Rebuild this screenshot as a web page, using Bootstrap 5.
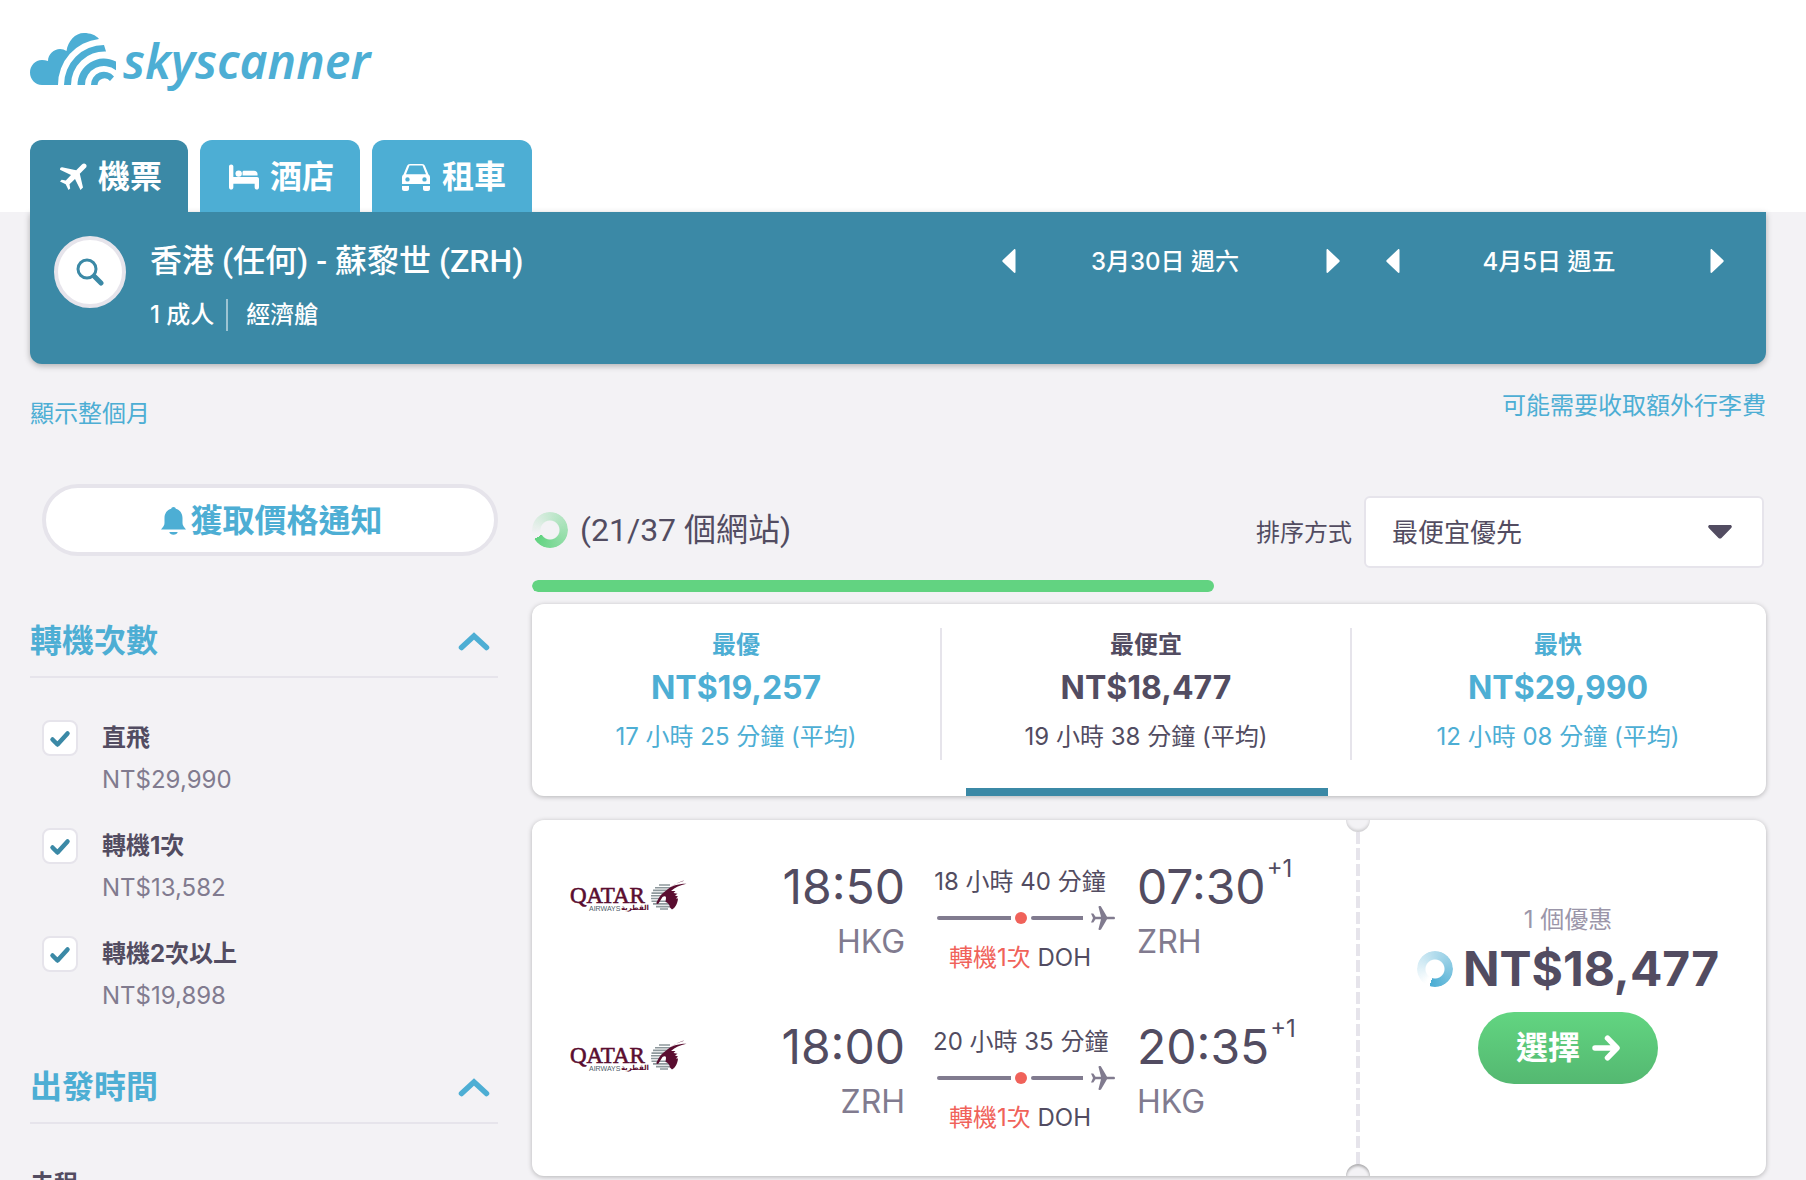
<!DOCTYPE html>
<html lang="zh-Hant">
<head>
<meta charset="utf-8">
<meta name="viewport" content="width=device-width, initial-scale=1">
<title>Skyscanner 機票</title>
<link href="https://cdn.jsdelivr.net/npm/bootstrap@5.3.0/dist/css/bootstrap.min.css" rel="stylesheet">
<style>
:root{--sky:#4daed4;--deep:#3b89a6;--ink:#524c61;--muted:#817b8f;--line:#e6e4eb;--green:#62d381}
body{font-family:Inter,"Noto Sans CJK TC",sans-serif;font-size:24px;line-height:32px;color:var(--ink);background:#f3f2f5;height:100vh;overflow:hidden}
a{color:var(--sky);text-decoration:none}
svg{display:block;flex:none;fill:currentColor}
.t-lg{font-size:32px;line-height:40px}
.t-xl{font-size:48px;line-height:56px}
.narrow-latin{font-family:Roboto,"Noto Sans CJK TC",sans-serif}
.gutters{padding-left:30px;padding-right:40px}
.topbar{background:#fff;height:212px}
.brand{color:var(--sky);height:58px;margin-top:33px;gap:6px}
.wordmark{font:italic 600 48px/56px "Noto Sans",sans-serif}
.service{background:var(--sky);color:#fff;height:72px;border-radius:12px 12px 0 0;padding:2px 26px 0 29px;gap:11px;font-weight:700}
.service.active{background:var(--deep)}
.summary{background:var(--deep);color:#fff;height:152px;border-radius:0 0 12px 12px;padding:24px 30px 0 24px;box-shadow:0 2px 6px rgba(0,0,0,.28);font-weight:500}
.search-btn{width:72px;height:72px;border:4px solid var(--line);color:var(--deep);background:#fff}
.route-name{padding:5px 0 18px}
.pax{border-right:2px solid rgba(255,255,255,.5);padding-right:12px;margin-right:18px}
.cabin-row{line-height:32px}
.stepper{width:362px;height:50px;padding:0 12px}
.stepper button{background:none;border:0;color:#fff;padding:0}
.stepper span{padding:2px 12px 0 0}
.side{width:468px;flex:none}
.alert-btn{height:72px;border:4px solid var(--line);background:#fff;color:var(--sky);font-weight:700;gap:4px;margin-left:12px;padding:2px 0 0 4px}
.filter-head{color:var(--sky);font-weight:700;border:0;border-bottom:2px solid var(--line);background:none;height:72px;padding:2px 7px 2px 0}
.filter-list{padding:42px 0 0 12px;gap:24px}
.filter-list .form-check-input{width:36px;height:36px;border:2px solid var(--line);border-radius:8px;margin:0;background-color:#fff;flex:none;box-shadow:none}
.filter-list .form-check-input:checked{background:#fff url("data:image/svg+xml,%3Csvg xmlns='http://www.w3.org/2000/svg' viewBox='0 0 32 32'%3E%3Cpath d='M8.500 17.500l5 5L23.500 11.500' fill='none' stroke='%233b89a6' stroke-width='4.500' stroke-linecap='round' stroke-linejoin='round'/%3E%3C/svg%3E") center/32px 32px no-repeat}
.filter-list .form-check-label{line-height:36px}
.price-note{color:var(--muted);display:block;line-height:48px}
.ring{width:36px;height:36px;border-radius:50%;flex:none;-webkit-mask:radial-gradient(circle,transparent 9px,#000 10px);mask:radial-gradient(circle,transparent 9px,#000 10px)}
.ring-green{background:conic-gradient(from 240deg,rgba(98,211,129,0) 15deg,#62d381 355deg)}
.ring-blue{background:conic-gradient(from 198deg,rgba(77,174,212,0) 15deg,#4daed4 355deg)}
.sort-select{width:400px;height:72px;border:2px solid var(--line);border-radius:6px;font-size:26px;color:var(--ink);padding:0 60px 0 26px;background:#fff url("data:image/svg+xml,%3Csvg xmlns='http://www.w3.org/2000/svg' viewBox='0 0 24 14'%3E%3Cpath d='M2 0h20c1.800 0 2.400 1.700 1.200 2.900l-9.700 10c-.8.800-2.200.800-3 0L.8 2.900C-.4 1.700.2 0 2 0z' fill='%23524c61'/%3E%3C/svg%3E") right 30px center/24px 14px no-repeat}
.load-track{height:12px;background:none;border-radius:6px;margin:12px 0}
.load-track .progress-bar{background:var(--green);border-radius:6px}
.panel{background:#fff;border-radius:12px;box-shadow:0 1px 5px rgba(0,0,0,.26)}
.modes{display:grid;grid-template-columns:410fr 410fr 414fr;height:192px}
.mode{padding:24px 0;color:var(--sky);border:0;background:none;position:relative;display:flex;flex-direction:column;justify-content:flex-start;align-items:stretch}
.mode>span{display:flex;flex-direction:column;height:132px;border-right:2px solid var(--line);line-height:34px}
.mode:last-child>span{border-color:transparent}
.mode .t-lg{line-height:52px}
.mode .avg{line-height:46px}
.mode.on{color:var(--ink)}
.mode.on::after{content:"";position:absolute;left:24px;right:24px;bottom:0;height:8px;background:var(--deep)}
.ticket{margin-top:24px;height:356px}
.legs{width:824px;padding:39px 0 0 38px;flex:none}
.leg{height:160px}
.carrier{padding-top:20px;width:195px}
.depart{width:140px;text-align:right}
.route{width:174px;margin:7px 30px 0 28px;text-align:center;white-space:nowrap}
.place{color:var(--muted);line-height:54px}
.red-stop{color:#f0625a}
.plus{line-height:20px;margin-left:1px}
.track{gap:8px;padding-left:4px;margin:8px -8px 12px 0;height:24px;color:var(--muted)}
.rail{height:4px;background:var(--muted);border-radius:2px 0 0 2px}
.stop-dot{width:12px;height:12px;border-radius:50%;background:#f0625a;margin:0 4px}
.perforation{width:4px;margin:12px 0;flex:none;position:relative;background:repeating-linear-gradient(var(--line) 0 12px,transparent 12px 16px)}
.perforation::before,.perforation::after{content:"";position:absolute;left:-10px;width:24px;height:12px;background:#f3f2f5}
.perforation::before{top:-12px;border-radius:0 0 12px 12px;box-shadow:inset 0 -2px 3px rgba(0,0,0,.15)}
.perforation::after{bottom:-12px;border-radius:12px 12px 0 0;box-shadow:inset 0 2px 3px rgba(0,0,0,.3)}
.offer-side{padding:84px 0 0 10px}
.offers{color:#9b96a9}
.best-price{gap:10px;padding:5px 0 15px}
.select-btn{width:180px;height:72px;border:0;color:#fff;font-weight:700;gap:12px;background:linear-gradient(#62d581,#54b871)}
</style>
</head>
<body>
<header class="topbar gutters d-flex flex-column justify-content-between overflow-hidden">
  <a href="#" class="brand d-flex" aria-label="skyscanner">
    <svg width="87" height="52" viewBox="0 0 87 52"><path d="M12 52C5 52 0 46 0 39.500S5 27 12 27c2 0 4 .3 6 1C18 21 24 16 30 16c2.500 0 4.500.7 6.500 2C38 8 45 0 54 0c6 0 12 2 15 6A46 46 0 0 0 28 52z"/><path d="M34 52A40 40 0 0 1 74 12l2 6.500A33.500 33.500 0 0 0 41 52z"/><path d="M47.500 52A26.500 26.500 0 0 1 86 28.400V37.300A19 19 0 0 0 55 52z"/><path d="M61 52A13 13 0 0 1 84 43.500L80 48a7 7 0 0 0-12.500 4z"/></svg>
    <span class="wordmark">skyscanner</span>
  </a>
  <nav class="d-flex t-lg" style="gap:12px">
    <a href="#" class="service active d-flex align-items-center">
      <svg width="28" height="28" viewBox="0 0 28 28"><path d="M26.800 1.200c1.300 1.300.8 2.800-.3 3.900L20.800 10.800 24 24.500 21.500 27 16 16l-5.500 5.300.7 4.200L9.500 27 6.700 21.300 1 18.500l1.700-1.700 4.100.7L12 12 1.500 7C.3 6.300 1.500 4.200 3 4.300L17.200 7.200 22.900 1.500C24 .4 25.500-.1 26.800 1.200z"/></svg>機票</a>
    <a href="#" class="service d-flex align-items-center">
      <svg width="30" height="26" viewBox="0 0 31 26"><path d="M2.200 0C3.500 0 4.500 1 4.500 2v11H29c1.200 0 2 .8 2 2v8.500c0 3.200-4.500 3.200-4.500 0V20h-22v3.500c0 3.200-4.500 3.200-4.500 0V2C0 1 1 0 2.200 0z"/><circle cx="10" cy="9.500" r="3.300"/><path d="M14 11.500V8c0-.9.600-1.500 1.500-1.500H26c2 0 3.500 1.500 3.500 3.500v1.500z"/></svg>酒店</a>
    <a href="#" class="service d-flex align-items-center">
      <svg width="30" height="28" viewBox="-1 0 30 28"><path fill-rule="evenodd" d="M8 1h12c1.500 0 2.500.8 3 2l3.500 8.500c1 .8 1.500 1.700 1.500 3V21H0v-6.500c0-1.300.5-2.200 1.500-3L5 3c.5-1.200 1.500-2 3-2zM7.500 2.600 4 11.200h20L20.500 2.600zM5.500 14.200a2.200 2.200 0 1 0 0 4.400 2.200 2.200 0 0 0 0-4.400zm17 0a2.200 2.200 0 1 0 0 4.400 2.200 2.200 0 0 0 0-4.400z"/><path d="M0 23h7v3c0 1-1 2-2 2H2c-1 0-2-1-2-2zM21 23h7v3c0 1-1 2-2 2h-3c-1 0-2-1-2-2z"/></svg>租車</a>
  </nav>
</header>

<div class="gutters">
  <section class="summary d-flex">
    <button type="button" class="search-btn rounded-circle d-flex align-items-center justify-content-center p-0" aria-label="搜尋">
      <svg width="28" height="28" viewBox="0 0 28 28" stroke="currentColor"><g fill="none"><circle cx="11" cy="11" r="9" stroke-width="3"/><path d="M18.500 18.500l6.500 6.500" stroke-width="5" stroke-linecap="round"/></g></svg>
    </button>
    <div class="ms-4 flex-grow-1">
      <div class="t-lg route-name narrow-latin">香港 (任何) - 蘇黎世 (ZRH)</div>
      <div class="d-flex cabin-row"><span class="pax">1 成人</span><span>經濟艙</span></div>
    </div>
    <div class="d-flex" style="gap:22px">
      <div class="stepper d-flex align-items-center justify-content-between">
        <button type="button" aria-label="前一天"><svg width="14" height="24" viewBox="0 0 14 24"><path d="M13.500 1v22c0 1-1 1.200-1.600.5L.8 13c-.7-.7-.7-1.300 0-2L11.900.5c.6-.7 1.600-.5 1.600.5z"/></svg></button>
        <span>3月30日 週六</span>
        <button type="button" aria-label="後一天"><svg width="14" height="24" viewBox="0 0 14 24"><path d="M.5 1v22c0 1 1 1.200 1.600.5L13.200 13c.7-.7.7-1.300 0-2L2.100.5C1.500-.2.5 0 .5 1z"/></svg></button>
      </div>
      <div class="stepper d-flex align-items-center justify-content-between">
        <button type="button" aria-label="前一天"><svg width="14" height="24" viewBox="0 0 14 24"><path d="M13.500 1v22c0 1-1 1.200-1.600.5L.8 13c-.7-.7-.7-1.300 0-2L11.900.5c.6-.7 1.600-.5 1.600.5z"/></svg></button>
        <span>4月5日 週五</span>
        <button type="button" aria-label="後一天"><svg width="14" height="24" viewBox="0 0 14 24"><path d="M.5 1v22c0 1 1 1.200 1.600.5L13.200 13c.7-.7.7-1.300 0-2L2.100.5C1.500-.2.5 0 .5 1z"/></svg></button>
      </div>
    </div>
  </section>

  <div class="d-flex justify-content-between" style="padding-top:26px;height:120px">
    <a href="#" class="pt-2">顯示整個月</a>
    <a href="#">可能需要收取額外行李費</a>
  </div>

  <div class="d-flex" style="gap:34px">
    <aside class="side">
      <div class="d-flex"><button type="button" class="alert-btn t-lg rounded-pill flex-grow-1 d-flex align-items-center justify-content-center">
        <svg width="25" height="28" viewBox="0 0 25 28"><path d="M12.500 0c1.300 0 2 .8 2.300 1.800C19 3 21.500 6.500 21.500 11v5c0 2.500 1.500 3.800 3.500 6.500H0C2 19.800 3.500 18.500 3.500 16v-5c0-4.500 2.500-8 6.700-9.200C10.500.8 11.200 0 12.500 0zM8.300 25h8.400c-.5 1.800-2 2.800-4.200 2.800S8.800 26.800 8.300 25z"/></svg>獲取價格通知</button></div>

      <button type="button" class="filter-head t-lg w-100 d-flex justify-content-between align-items-center" style="margin-top:50px">轉機次數
        <svg width="34" height="20" viewBox="0 0 34 20"><path d="M4.500 16.500L17 5l12.500 11.500" fill="none" stroke="currentColor" stroke-width="5.500" stroke-linecap="round"/></svg></button>
      <div class="filter-list d-flex flex-column">
        <div class="d-flex gap-4"><input class="form-check-input" type="checkbox" id="s0" checked><label class="form-check-label" for="s0"><b>直飛</b><span class="price-note">NT$29,990</span></label></div>
        <div class="d-flex gap-4"><input class="form-check-input" type="checkbox" id="s1" checked><label class="form-check-label" for="s1"><b>轉機1次</b><span class="price-note">NT$13,582</span></label></div>
        <div class="d-flex gap-4"><input class="form-check-input" type="checkbox" id="s2" checked><label class="form-check-label" for="s2"><b>轉機2次以上</b><span class="price-note">NT$19,898</span></label></div>
      </div>

      <button type="button" class="filter-head t-lg w-100 d-flex justify-content-between align-items-center" style="margin-top:32px">出發時間
        <svg width="34" height="20" viewBox="0 0 34 20"><path d="M4.500 16.500L17 5l12.500 11.500" fill="none" stroke="currentColor" stroke-width="5.500" stroke-linecap="round"/></svg></button>
      <div class="fw-bold" style="padding-top:44px">去程</div>
    </aside>

    <main class="flex-grow-1">
      <div class="d-flex align-items-center" style="padding:12px 2px 0 0">
        <div class="d-flex align-items-center flex-grow-1 t-lg narrow-latin pb-1" style="gap:12px"><i class="ring ring-green"></i>(21/37 個網站)</div>
        <label for="sort" style="padding:2px 12px 0 0">排序方式</label>
        <select id="sort" class="form-select sort-select"><option>最便宜優先</option></select>
      </div>
      <div class="progress load-track" role="progressbar" aria-label="搜尋進度"><div class="progress-bar" style="width:55.3%"></div></div>

      <div class="panel modes">
        <button type="button" class="mode"><span><b>最優</b><b class="t-lg">NT$19,257</b><span class="avg">17 小時 25 分鐘 (平均)</span></span></button>
        <button type="button" class="mode on"><span><b>最便宜</b><b class="t-lg">NT$18,477</b><span class="avg">19 小時 38 分鐘 (平均)</span></span></button>
        <button type="button" class="mode"><span><b>最快</b><b class="t-lg">NT$29,990</b><span class="avg">12 小時 08 分鐘 (平均)</span></span></button>
      </div>

      <article class="panel ticket d-flex">
        <div class="legs">
          <div class="leg d-flex">
            <div class="carrier">
              <svg width="117" height="36" viewBox="0 0 117 36" role="img" aria-label="Qatar Airways">
                <defs><g id="qatar">
                  <text x="0" y="24" font-family="Liberation Serif" font-size="23" fill="#5a0d30" stroke="#5a0d30" stroke-width=".6">QATAR</text>
                  <text x="19" y="32" font-family="Liberation Sans" font-size="7" fill="#4d5a66">AIRWAYS</text>
                  <text x="79" y="31" font-family="DejaVu Sans" font-size="7" font-weight="700" text-anchor="end" direction="ltr" fill="#5a0d30">القطرية</text>
                  <g fill="none" stroke="#8d989c" stroke-width="1.600"><path d="M89 6h11M85 8.700h18M83 11.400h16M81.500 14.100h13M81 16.800h11M81 19.500h8M81.500 22.200h20M83 24.900h18M86 27.600h14M90 30h8"/></g>
                  <path fill="#5a0d30" d="M113.500 1.500C106 4 99 9 93 14c-3 2.500-5 6-6.500 9.500-.5 1.500 1 1.800 2 1l4-6.500c2-1.500 3.500-1 3.500 1l-.5 4c2 .5 4 2 4.500 5.500l2 2c3-1.500 5.500-5.500 6-11h-2l2-2-3-1 2.500-1.800-4-.7 2-2-4.500 0c4-3.500 9-6 15.500-7.300C107 4.700 102 7 98 10c4-3.500 9.500-6.500 15.500-8z"/>
                </g></defs><use href="#qatar"/></svg>
            </div>
            <div class="depart"><div class="t-xl">18:50</div><div class="place t-lg">HKG</div></div>
            <div class="route">18 小時 40 分鐘
              <div class="track d-flex align-items-center"><div class="d-flex align-items-center flex-grow-1"><i class="rail" style="width:50.7%"></i><i class="stop-dot"></i><i class="rail flex-grow-1"></i></div>
              <svg width="24" height="24" viewBox="0 0 24 24"><path d="M22.500 10.700c2 0 2 2.600 0 2.600H16L10 23.500c-.5.700-2.800.5-2.500-.5L10 13.300H4.500L2.300 16.500H0L2 12 0 7.500h2.300l2.200 3.200H10L7.500 1C7.200 0 9.500-.2 10 .5l6 10.200z"/></svg></div>
              <span class="red-stop">轉機1次</span> DOH</div>
            <div><div class="d-flex"><span class="t-xl">07:30</span><span class="plus">+1</span></div><div class="place t-lg">ZRH</div></div>
          </div>
          <div class="leg d-flex">
            <div class="carrier"><svg width="117" height="36" viewBox="0 0 117 36" role="img" aria-label="Qatar Airways"><use href="#qatar"/></svg></div>
            <div class="depart"><div class="t-xl">18:00</div><div class="place t-lg">ZRH</div></div>
            <div class="route">20 小時 35 分鐘
              <div class="track d-flex align-items-center"><div class="d-flex align-items-center flex-grow-1"><i class="rail" style="width:50.7%"></i><i class="stop-dot"></i><i class="rail flex-grow-1"></i></div>
              <svg width="24" height="24" viewBox="0 0 24 24"><path d="M22.500 10.700c2 0 2 2.600 0 2.600H16L10 23.500c-.5.700-2.800.5-2.500-.5L10 13.300H4.500L2.300 16.500H0L2 12 0 7.500h2.300l2.200 3.200H10L7.500 1C7.200 0 9.500-.2 10 .5l6 10.200z"/></svg></div>
              <span class="red-stop">轉機1次</span> DOH</div>
            <div><div class="d-flex"><span class="t-xl">20:35</span><span class="plus">+1</span></div><div class="place t-lg">HKG</div></div>
          </div>
        </div>
        <div class="perforation"></div>
        <div class="offer-side flex-grow-1 d-flex flex-column align-items-center">
          <div class="offers">1 個優惠</div>
          <div class="best-price d-flex align-items-center t-xl fw-bold"><i class="ring ring-blue"></i>NT$18,477</div>
          <button type="button" class="select-btn t-lg rounded-pill d-flex align-items-center justify-content-center p-0">選擇
            <svg width="28" height="26" viewBox="0 0 28 26"><path d="M3 13h20M15.500 3.200L25 13l-9.500 9.800" fill="none" stroke="currentColor" stroke-width="5.500" stroke-linecap="round" stroke-linejoin="round"/></svg></button>
        </div>
      </article>
    </main>
  </div>
</div>
<script src="https://cdn.jsdelivr.net/npm/bootstrap@5.3.0/dist/js/bootstrap.bundle.min.js"></script>
</body>
</html>
